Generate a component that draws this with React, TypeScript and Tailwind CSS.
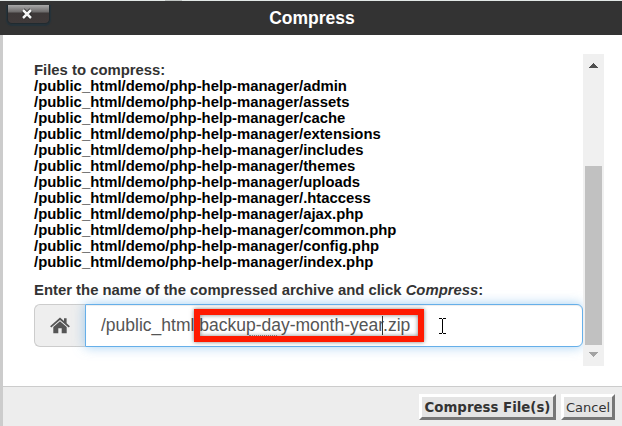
import React from 'react';

const files = [
  'admin', 'assets', 'cache', 'extensions', 'includes', 'themes', 'uploads',
  '.htaccess', 'ajax.php', 'common.php', 'config.php', 'index.php',
];

function CloseButton() {
  return (
    <button
      aria-label="Close"
      className="absolute left-[7px] top-[4px] flex h-[19px] w-[43px] items-center justify-center rounded-b-[5px] border border-t-0 border-[#202a2f] bg-[linear-gradient(#a9a9a9_0px,#6c6a6a_7px,#3d3838_8px,#403a3a_100%)] shadow-[0_1px_1px_1px_#25323a]"
    >
      <svg width="12" height="12" viewBox="0 0 12 12" className="mt-[-1px] mr-[3px]">
        <path d="M2 2L10 10M10 2L2 10" stroke="#1d1d1d" strokeWidth="4" />
        <path d="M2 2L10 10M10 2L2 10" stroke="#f4f4f4" strokeWidth="2.500" />
      </svg>
    </button>
  );
}

function HomeIcon() {
  return (
    <svg width="20" height="17" viewBox="0 0 20 17" fill="#555">
      <path d="M10 4.2L3.3 10v6.2h5v-5h3.4v5h5V10z" />
      <path d="M10 0.5L14 4V1.3h2.6v5l3.3 2.9-1.2 1.4L10 3 1.3 10.600 0.1 9.200z" />
    </svg>
  );
}

function ArchiveInput() {
  return (
    <div className="relative flex h-[43px] w-[549px] text-[#555]">
      <div className="flex w-[51px] items-center justify-center rounded-l-[6px] border border-r-0 border-[#ccc] bg-[#eee]">
        <HomeIcon />
      </div>
      <div className="flex flex-1 items-center rounded-r-[6px] border border-[#66afe9] bg-white pl-[15px] text-[17.500px] whitespace-pre shadow-[inset_0_1px_1px_rgba(0,0,0,0.075),0_0_12px_rgba(102,175,233,0.6)]">
        <span className="mt-[-1px]">/public_html/backup-day-month-year.zip</span>
      </div>
      <div className="absolute left-[348px] top-[12px] h-[19px] w-px bg-[#333]" />
      <div className="absolute left-[215px] top-[31px] w-[28px] border-t border-dotted border-[#999]" />
      <div className="absolute left-[160px] top-[5px] h-[33px] w-[230px] border-[6px] border-[#ff1a00] shadow-[0_0_4px_rgba(0,0,0,0.5),inset_0_0_4px_rgba(0,0,0,0.5)]" />
      <svg className="absolute left-[405px] top-[14px]" width="8" height="17" viewBox="0 0 8 17" shapeRendering="crispEdges">
        <path d="M0 .5h3M4 .5h3M3.500 1v14M0 15.500h3M4 15.500h3" stroke="#000" fill="none" />
      </svg>
    </div>
  );
}

function Scrollbar() {
  return (
    <div className="flex h-[312px] w-[21px] shrink-0 flex-col items-center bg-[#f0f0f0]">
      <svg width="21" height="112" viewBox="0 0 21 112" shapeRendering="crispEdges">
        <path d="M6 14L10.500 9L15 14z" fill="#505050" />
      </svg>
      <div className="h-[179px] w-[17px] bg-[#c1c1c1]" />
      <svg width="21" height="21" viewBox="0 0 21 21" shapeRendering="crispEdges">
        <path d="M6 7L10.500 12L15 7z" fill="#a3a3a3" />
      </svg>
    </div>
  );
}

export default function App() {
  return (
    <div className="flex h-[426px] w-[622px] flex-col overflow-hidden bg-white font-['Liberation_Sans',Arial,sans-serif]">
      <div className="flex h-px shrink-0 bg-[#e2e8e6]">
        <div className="ml-[165px] h-px w-[17px] bg-[#bfc4c2]" />
      </div>
      <header className="relative flex h-[34px] shrink-0 items-center justify-center bg-[#333]">
        <CloseButton />
        <h1 className="pl-[2px] text-[17.500px] leading-[18px] font-bold text-white">Compress</h1>
      </header>
      <div className="flex flex-1 flex-col border-l-[3px] border-[#ccc]">
        <main className="flex h-[351px] pt-[19px]">
          <div className="h-[312px] w-[580px] overflow-hidden pl-[31px] pt-2 text-[14.860px] leading-4 font-bold text-[#333]">
            <p>Files to compress:</p>
            <ul className="text-black">
              {files.map((name) => (
                <li key={name}>/public_html/demo/php-help-manager/{name}</li>
              ))}
            </ul>
            <p className="mt-3 mb-[6px] whitespace-nowrap">
              Enter the name of the compressed archive and click <em>Compress</em>:
            </p>
            <div className="font-normal">
              <ArchiveInput />
            </div>
          </div>
          <Scrollbar />
        </main>
        <footer className="flex flex-1 items-start justify-end gap-[5px] border-t border-[#ccc] bg-[#ededed] pt-[7px] pr-[7px] font-['DejaVu_Sans',Verdana,sans-serif] text-[13px] text-[#333]">
          <button className="h-[26px] w-[137px] border-[3px] border-t-white border-r-[#777] border-b-[#777] border-l-white bg-[#e4e4e4] pt-px text-[13.330px] leading-5 font-bold whitespace-nowrap">
            Compress File(s)
          </button>
          <button className="h-[26px] w-[54px] border-[3px] border-t-white border-r-[#777] border-b-[#777] border-l-white bg-[#e4e4e4] pt-px leading-5 whitespace-nowrap">
            Cancel
          </button>
        </footer>
      </div>
    </div>
  );
}
